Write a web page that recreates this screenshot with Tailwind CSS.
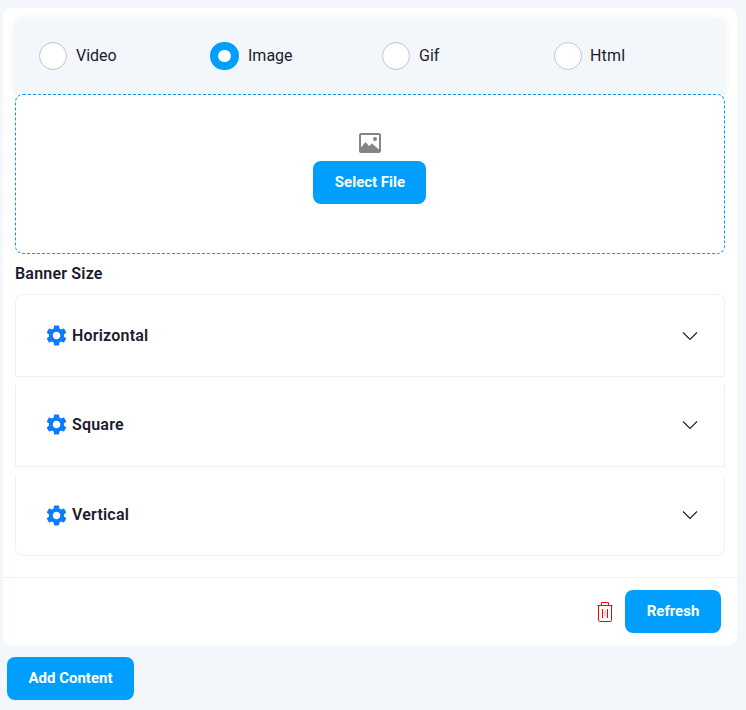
<!DOCTYPE html>
<html lang="en">
<head>
    <meta charset="UTF-8" />
    <meta name="viewport" content="width=device-width, initial-scale=1.0" />
    <title>Banner</title>
    <script src="https://cdn.jsdelivr.net/npm/@tailwindcss/browser@4"></script>
</head>
<body class="min-h-screen bg-[#f3f6fa] font-['Roboto',sans-serif] text-[#1c1b2e] pt-2 pl-[3px] pr-[9px]">

<div class="bg-white rounded-lg">
    <div class="px-3 pt-[11px]">
        <!-- Type radios -->
        <div class="h-[75px] bg-[#f3f6fa] rounded-t-lg shadow-[0_0_6px_rgba(120,110,100,0.14)] pl-[24px] pb-[2px] grid grid-cols-[repeat(4,172px)] items-center">
            <label class="flex items-center gap-[9px] text-base">
                <span class="w-[28px] h-[28px] rounded-full bg-white border border-[#c4c4c4]"></span>
                Video
            </label>
            <label class="flex items-center gap-[9px] text-base -ml-[1px]">
                <span class="w-[29px] h-[28px] rounded-full bg-white border-[8px] border-[#009ffd]"></span>
                Image
            </label>
            <label class="flex items-center gap-[9px] text-base -ml-[1px]">
                <span class="w-[28px] h-[28px] rounded-full bg-white border border-[#c4c4c4]"></span>
                Gif
            </label>
            <label class="flex items-center gap-[8px] text-base -ml-[1px] tracking-[0.2px]">
                <span class="w-[28px] h-[28px] rounded-full bg-white border border-[#c4c4c4]"></span>
                Html
            </label>
        </div>

        <!-- Upload box -->
        <div class="relative h-[160px] bg-white rounded-lg border border-dashed border-[#009ffd] flex flex-col items-center pt-[38px]">
            <svg class="w-[22px] h-[20px]" viewBox="0 0 22 20">
                <rect x="1" y="1" width="20" height="18" rx="1" fill="#fff" stroke="#858585" stroke-width="2" />
                <circle cx="16" cy="6" r="2" fill="#858585" />
                <path d="M1.5 18.5V15l5-6 3.5 4 3-2.5 7.5 6.5v1.5z" fill="#858585" />
            </svg>
            <button class="mt-[8px] -ml-[2px] pl-[2px] w-[113px] h-[43px] bg-[#009ffd] text-white text-[15px] font-bold rounded-lg">Select File</button>
        </div>

        <div class="mt-[11px] text-base leading-[18px] font-semibold tracking-[0.2px]">Banner Size</div>

        <!-- Size accordion -->
        <div class="mt-[11px]">
            <div class="h-[83px] rounded-t-lg border border-[#eef0f3] px-[30px] flex items-center justify-between">
                <div class="flex items-center gap-[3px] text-base font-semibold tracking-[0.2px]">
                    <svg class="w-[25px] h-[25px] -ml-[2px] text-[#0a7cff]" viewBox="0 0 24 24" fill="currentColor"><path d="M19.14 12.94c.04-.3.06-.61.06-.94 0-.32-.02-.64-.07-.94l2.03-1.58c.18-.14.23-.41.12-.61l-1.92-3.32c-.12-.22-.37-.29-.59-.22l-2.39.96c-.5-.38-1.03-.7-1.62-.94l-.36-2.54c-.04-.24-.24-.41-.48-.41h-3.84c-.24 0-.43.17-.47.41l-.36 2.54c-.59.24-1.13.57-1.62.94l-2.39-.96c-.22-.08-.47 0-.59.22L2.74 8.87c-.12.21-.08.47.12.61l2.03 1.58c-.05.3-.09.63-.09.94s.02.64.07.94l-2.03 1.58c-.18.14-.23.41-.12.61l1.92 3.32c.12.22.37.29.59.22l2.39-.96c.5.38 1.03.7 1.62.94l.36 2.54c.05.24.24.41.48.41h3.84c.24 0 .44-.17.47-.41l.36-2.54c.59-.24 1.13-.56 1.62-.94l2.39.96c.22.08.47 0 .59-.22l1.92-3.32c.12-.22.07-.47-.12-.61l-2.01-1.58zM12 15.6c-1.98 0-3.6-1.62-3.6-3.6s1.62-3.6 3.6-3.6 3.6 1.62 3.6 3.6-1.62 3.6-3.6 3.6z" /></svg>
                    Horizontal
                </div>
                <svg class="w-[16px] h-[16px] -mr-[4px]" viewBox="0 0 16 16" fill="none" stroke="#1c1b2e" stroke-width="1.1"><path d="M1 4.5l7 7 7-7" /></svg>
            </div>
            <div class="mt-2 h-[82px] pb-[2px] border-x border-b border-[#eef0f3] px-[30px] flex items-center justify-between">
                <div class="flex items-center gap-[3px] text-base font-semibold tracking-[0.2px]">
                    <svg class="w-[25px] h-[25px] -ml-[2px] text-[#0a7cff]" viewBox="0 0 24 24" fill="currentColor"><path d="M19.14 12.94c.04-.3.06-.61.06-.94 0-.32-.02-.64-.07-.94l2.03-1.58c.18-.14.23-.41.12-.61l-1.92-3.32c-.12-.22-.37-.29-.59-.22l-2.39.96c-.5-.38-1.03-.7-1.62-.94l-.36-2.54c-.04-.24-.24-.41-.48-.41h-3.84c-.24 0-.43.17-.47.41l-.36 2.54c-.59.24-1.13.57-1.62.94l-2.39-.96c-.22-.08-.47 0-.59.22L2.74 8.87c-.12.21-.08.47.12.61l2.03 1.58c-.05.3-.09.63-.09.94s.02.64.07.94l-2.03 1.58c-.18.14-.23.41-.12.61l1.92 3.32c.12.22.37.29.59.22l2.39-.96c.5.38 1.03.7 1.62.94l.36 2.54c.05.24.24.41.48.41h3.84c.24 0 .44-.17.47-.41l.36-2.54c.59-.24 1.13-.56 1.62-.94l2.39.96c.22.08.47 0 .59-.22l1.92-3.32c.12-.22.07-.47-.12-.61l-2.01-1.58zM12 15.6c-1.98 0-3.6-1.62-3.6-3.6s1.62-3.6 3.6-3.6 3.6 1.62 3.6 3.6-1.62 3.6-3.6 3.6z" /></svg>
                    Square
                </div>
                <svg class="w-[16px] h-[16px] -mr-[4px]" viewBox="0 0 16 16" fill="none" stroke="#1c1b2e" stroke-width="1.1"><path d="M1 4.5l7 7 7-7" /></svg>
            </div>
            <div class="mt-2 h-[81px] rounded-b-lg border-x border-b border-[#eef0f3] px-[30px] flex items-center justify-between">
                <div class="flex items-center gap-[3px] text-base font-semibold tracking-[0.2px]">
                    <svg class="w-[25px] h-[25px] -ml-[2px] text-[#0a7cff]" viewBox="0 0 24 24" fill="currentColor"><path d="M19.14 12.94c.04-.3.06-.61.06-.94 0-.32-.02-.64-.07-.94l2.03-1.58c.18-.14.23-.41.12-.61l-1.92-3.32c-.12-.22-.37-.29-.59-.22l-2.39.96c-.5-.38-1.03-.7-1.62-.94l-.36-2.54c-.04-.24-.24-.41-.48-.41h-3.84c-.24 0-.43.17-.47.41l-.36 2.54c-.59.24-1.13.57-1.62.94l-2.39-.96c-.22-.08-.47 0-.59.22L2.74 8.87c-.12.21-.08.47.12.61l2.03 1.58c-.05.3-.09.63-.09.94s.02.64.07.94l-2.03 1.58c-.18.14-.23.41-.12.61l1.92 3.32c.12.22.37.29.59.22l2.39-.96c.5.38 1.03.7 1.62.94l.36 2.54c.05.24.24.41.48.41h3.84c.24 0 .44-.17.47-.41l.36-2.54c.59-.24 1.13-.56 1.62-.94l2.39.96c.22.08.47 0 .59-.22l1.92-3.32c.12-.22.07-.47-.12-.61l-2.01-1.58zM12 15.6c-1.98 0-3.6-1.62-3.6-3.6s1.62-3.6 3.6-3.6 3.6 1.62 3.6 3.6-1.62 3.6-3.6 3.6z" /></svg>
                    Vertical
                </div>
                <svg class="w-[16px] h-[16px] -mr-[4px]" viewBox="0 0 16 16" fill="none" stroke="#1c1b2e" stroke-width="1.1"><path d="M1 4.5l7 7 7-7" /></svg>
            </div>
        </div>
    </div>

    <!-- Footer -->
    <div class="mt-[21px] border-t border-[#eef0f3] pt-3 pb-3 pr-4 flex items-center justify-end gap-3">
        <svg class="w-[16px] h-[20px]" viewBox="0 0 16 20" fill="none" stroke="#ff0000" stroke-width="1"><path d="M0.5 3.5h15M4.5 3.5V0.5h7v3M1.5 3.5v15a1 1 0 0 0 1 1h11a1 1 0 0 0 1-1v-15M5.5 7v9M10.5 7v9" /><path d="M8 8.5v6" stroke-opacity="0.45" /></svg>
        <button class="w-[96px] h-[43px] bg-[#009ffd] text-white text-[15px] font-bold rounded-lg">Refresh</button>
    </div>
</div>

<button class="mt-3 ml-1 w-[127px] h-[43px] bg-[#009ffd] text-white text-[15px] font-bold rounded-lg">Add Content</button>

</body>
</html>
